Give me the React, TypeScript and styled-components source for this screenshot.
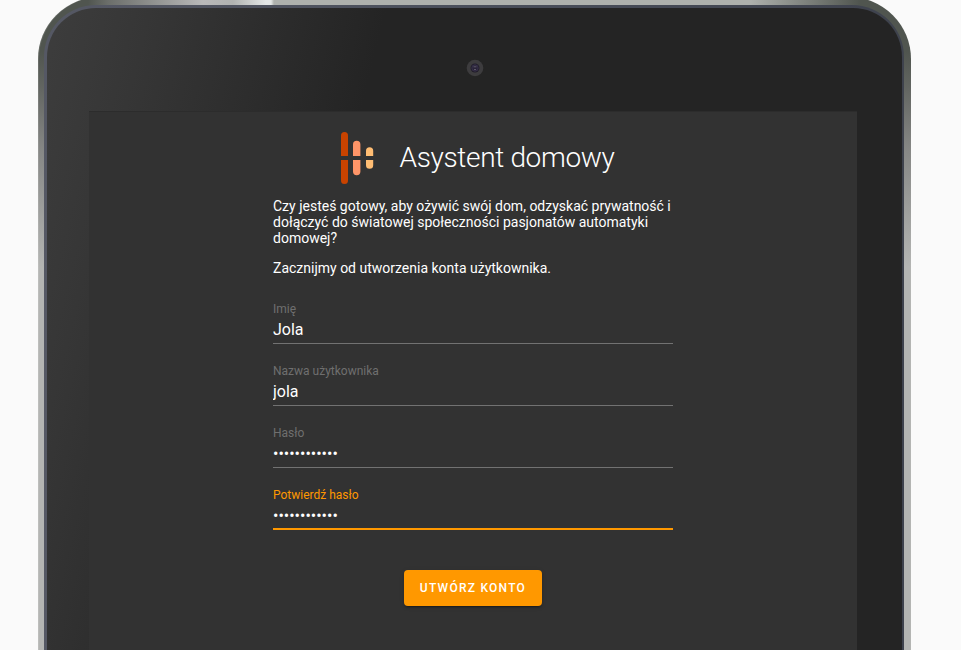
import React from "react";
import styled, { createGlobalStyle } from "styled-components";

const GlobalStyle = createGlobalStyle`
  * { box-sizing: border-box; }
  body {
    margin: 0;
    background: #fafafa;
    font-family: Roboto, "Noto Sans", sans-serif;
    color: #fff;
  }
`;

const Page = styled.div`
  height: 650px;
  overflow: hidden;
  display: flow-root;
`;

const Frame = styled.div`
  width: 873.5px;
  height: 900px;
  margin: -3px 0 0 37.5px;
  padding: 8px 7px 0 6.5px;
  border-radius: 62px;
  background:
    linear-gradient(90deg, #50554f 0, #50554f 50px, #6b6e6a 70px, #b9b9b9 165px, #b1b3b1 195px, #e4e7e6 228px, #e4e7e6 233px, #aeb1ad 236px, #aeb1ad 712px, #50554f 822px) 0 0 / 100% 8px no-repeat,
    linear-gradient(180deg, #50554f 0, #50554f 55px, #626561 90px, #858684 150px, #b4b5b3 270px, #b4b5b3 100%);
  box-shadow: inset 1px 0 0 rgba(255, 255, 255, 0.12);
`;

const Rim = styled.div`
  height: 892px;
  padding: 3px 2px 0 3px;
  border-radius: 52px;
  background: linear-gradient(90deg, #555864 0, #4a4f5b 50%, #3e424d 100%);
`;

const Bezel = styled.div`
  height: 889px;
  padding: 0 45px 0 42px;
  border-radius: 49px;
  background: linear-gradient(104deg, #3d3d3d 0, #363636 100px, #242424 330px, #242424 100%);
`;

const CameraBar = styled.div`
  height: 103px;
  display: flex;
  justify-content: center;
  padding: 50.5px 0 0 4px;
`;

const Camera = styled.svg`
  width: 18px;
  height: 18px;
`;

const Screen = styled.main`
  height: 560px;
  padding: 20px 0 0;
  background: #323232;
  border-top: 1px solid #2c2c2c;
`;

const Content = styled.div`
  width: 400px;
  margin: 0 auto;
`;

const Header = styled.header`
  height: 52px;
  display: flex;
  align-items: center;
  padding-left: 67px;
  gap: 25.5px;
`;

const Logo = styled.svg`
  width: 34px;
  height: 52px;
  flex: none;
`;

const Title = styled.h1`
  margin: 0;
  font-size: 28px;
  font-weight: 300;
  line-height: 36px;
  letter-spacing: -0.012em;
  white-space: nowrap;
`;

const Intro = styled.p`
  margin: 14px 0 0;
  font-size: 14px;
  line-height: 16px;
`;

const Form = styled.form`
  margin-top: 12px;
`;

const Field = styled.label`
  display: flex;
  flex-direction: column;
  height: 56px;
  margin-bottom: 6px;
  padding-top: 13px;
`;

const FieldLabel = styled.span<{ $active?: boolean }>`
  font-size: 12px;
  line-height: 16px;
  color: ${(p) => (p.$active ? "#ff9800" : "#6f6f6f")};
`;

const FieldInput = styled.input<{ $active?: boolean }>`
  width: 100%;
  height: 27px;
  padding: 0 0 ${(p) => (p.$active ? 0 : 1)}px;
  border: 0;
  border-bottom: ${(p) => (p.$active ? "2px solid #ff9800" : "1px solid #727272")};
  border-radius: 0;
  outline: 0;
  background: transparent;
  color: #fff;
  font: 400 16px Roboto, "Noto Sans", sans-serif;
`;

const SubmitButton = styled.button`
  display: block;
  width: 138px;
  height: 36px;
  margin: 40px auto 0;
  padding: 0;
  border: 0;
  border-radius: 4px;
  background: #ff9800;
  color: #fff;
  font: 500 12px/36px Roboto, "Noto Sans", sans-serif;
  letter-spacing: 1.25px;
  text-transform: uppercase;
  box-shadow: 0 3px 1px -2px rgba(0, 0, 0, 0.2), 0 2px 2px rgba(0, 0, 0, 0.14), 0 1px 5px rgba(0, 0, 0, 0.12);
`;

const fields = [
  { label: "Imię", value: "Jola", type: "text" },
  { label: "Nazwa użytkownika", value: "jola", type: "text" },
  { label: "Hasło", value: "domowy123456", type: "password" },
  { label: "Potwierdź hasło", value: "domowy123456", type: "password", active: true },
];

export default function App() {
  return (
    <Page>
      <GlobalStyle />
      <Frame>
        <Rim>
          <Bezel>
            <CameraBar>
              <Camera viewBox="0 0 18 18">
                <circle cx="9" cy="9" r="8.3" fill="#3d3c3e" />
                <circle cx="9" cy="9" r="4.5" fill="#211d2a" />
                <circle cx="9" cy="9" r="3.2" fill="#292338" stroke="#3f3855" strokeWidth="0.7" />
                <path d="M7.5 7.8h3M8 10.5h2" stroke="#6b6575" strokeWidth="0.8" />
              </Camera>
            </CameraBar>
            <Screen>
              <Content>
                <Header>
                  <Logo viewBox="0 0 34 52">
                    <path d="M1 24V3.5a3.5 3.5 0 0 1 7 0V24zM1 28v20.5a3.5 3.5 0 0 0 7 0V28z" fill="#c84300" />
                    <path d="M13 24V12.5a3.7 3.7 0 0 1 7.4 0V24zM13 28v11.5a3.7 3.7 0 0 0 7.4 0V28z" fill="#ff9568" />
                    <path d="M26 24v-5.2a3.6 3.6 0 0 1 7.2 0V24zM26 28v5.2a3.6 3.6 0 0 0 7.2 0V28z" fill="#ffbd73" />
                  </Logo>
                  <Title>Asystent domowy</Title>
                </Header>
                <Intro>
                  Czy jesteś gotowy, aby ożywić swój dom, odzyskać prywatność i dołączyć do światowej
                  społeczności pasjonatów automatyki domowej?
                </Intro>
                <Intro>Zacznijmy od utworzenia konta użytkownika.</Intro>
                <Form>
                  {fields.map((f) => (
                    <Field key={f.label}>
                      <FieldLabel $active={f.active}>{f.label}</FieldLabel>
                      <FieldInput type={f.type} defaultValue={f.value} $active={f.active} />
                    </Field>
                  ))}
                  <SubmitButton type="button">Utwórz konto</SubmitButton>
                </Form>
              </Content>
            </Screen>
          </Bezel>
        </Rim>
      </Frame>
    </Page>
  );
}
